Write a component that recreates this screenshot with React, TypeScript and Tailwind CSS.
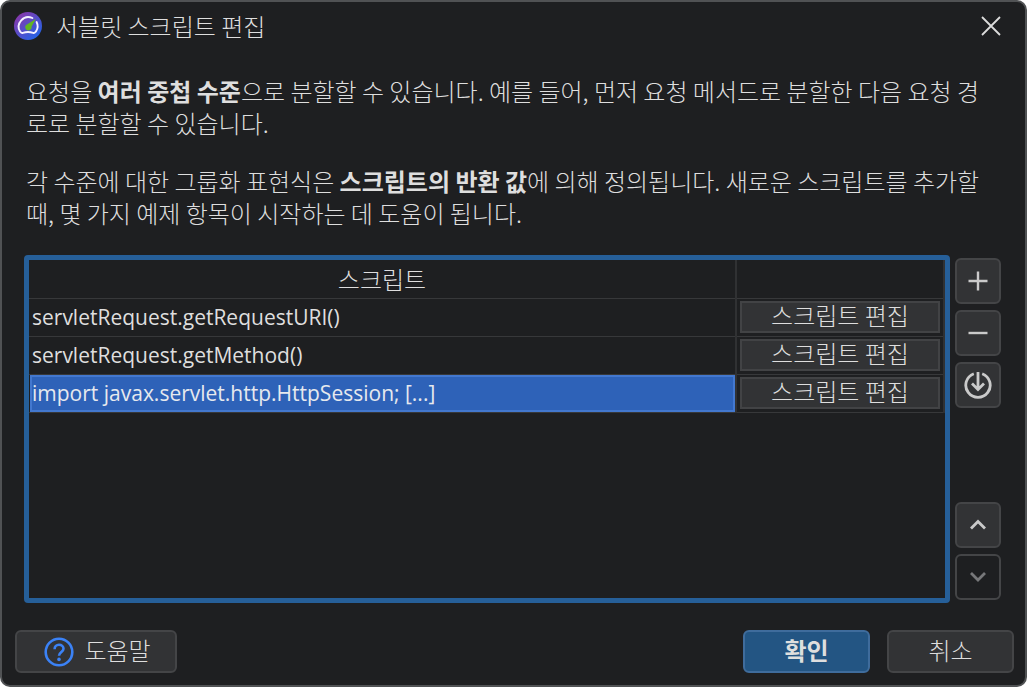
import React from 'react';

const scripts = [
  'servletRequest.getRequestURI()',
  'servletRequest.getMethod()',
  'import javax.servlet.http.HttpSession; [...]',
];

const selectedIndex = 2;

type ToolButtonProps = {
  label: string;
  disabled?: boolean;
  children: React.ReactNode;
};

const ToolButton: React.FC<ToolButtonProps> = ({ label, disabled, children }) => {
  return (
    <button
      type="button"
      aria-label={label}
      disabled={disabled}
      className="flex size-[46px] items-center justify-center rounded-md border-2 border-[#444547] bg-[#323335] text-[#cacaca] disabled:bg-transparent disabled:text-[#77787a]"
    >
      <svg className="size-7" viewBox="0 0 28 28" fill="none" stroke="currentColor" strokeWidth="2.4">
        {children}
      </svg>
    </button>
  );
};

const TitleBar: React.FC = () => {
  return (
    <header className="flex h-12 items-center justify-between pl-3 pr-6">
      <div className="flex items-center gap-[14px]">
        <svg className="size-7" viewBox="0 0 28 28" fill="none">
          <defs>
            <linearGradient id="logo" x1="4" y1="4" x2="22" y2="25" gradientUnits="userSpaceOnUse">
              <stop stopColor="#8439ad" />
              <stop offset="1" stopColor="#2861e4" />
            </linearGradient>
          </defs>
          <circle cx="14" cy="14" r="14" fill="url(#logo)" />
          <path
            d="M18.4 6A9.6 9.6 0 0 0 6.1 19.6C6.8 20.7 7.6 21.3 8.9 20.8C12.5 19.6 15.5 19.6 19.1 20.8C20.4 21.3 21.2 20.7 21.9 19.6A9.6 9.6 0 0 0 22.6 10"
            stroke="#f4f1ff"
            strokeWidth="1.9"
            strokeLinecap="round"
          />
          <path d="M22 6.8L17.6 14.6A3.2 3.2 0 1 1 12.9 12.4Z" fill="#62b522" />
        </svg>
        <h1>서블릿 스크립트 편집</h1>
      </div>
      <button type="button" aria-label="닫기" className="text-[#dcdcdc]">
        <svg className="size-5" viewBox="0 0 20 20" stroke="currentColor" strokeWidth="1.8">
          <path d="M1 1L19 19M19 1L1 19" />
        </svg>
      </button>
    </header>
  );
};

const ScriptTable: React.FC = () => {
  return (
    <div className="min-w-0 flex-1 rounded-[4px] border-[5px] border-[#265f99]">
      <table className="w-full table-fixed border-collapse">
        <thead>
          <tr className="h-[38px] border-b border-[#37383a]">
            <th className="p-0 font-light leading-8">스크립트</th>
            <th aria-label="동작" className="w-[208px] border-x-2 border-[#303133] p-0" />
          </tr>
        </thead>
        <tbody>
          {scripts.map((script, index) => (
            <tr key={script} className="h-[38px] border-b border-[#37383a]">
              <td className="h-[38px] p-0">
                <div
                  className={
                    index === selectedIndex
                      ? 'ml-px h-[37px] truncate border-2 border-[#4378cf] bg-[#2e62b8] font-["Open_Sans"] text-[21px] font-normal leading-8 text-[#e6e9ee]'
                      : 'ml-px h-[37px] truncate border-2 border-transparent font-["Open_Sans"] text-[21px] font-normal leading-8'
                  }
                >
                  {script}
                </div>
              </td>
              <td className="border-x-2 border-[#303133] px-[3px] py-0">
                <button
                  type="button"
                  className="flex h-8 w-full items-center justify-center border-2 border-[#424345] bg-[#323335] pb-1"
                >
                  스크립트 편집
                </button>
              </td>
            </tr>
          ))}
        </tbody>
      </table>
    </div>
  );
};

const App: React.FC = () => {
  return (
    <div className="min-h-screen bg-white">
      <main className="flex min-h-screen flex-col rounded-[10px] border-2 border-[#505254] bg-[#1e1f21] font-['Noto_Sans_CJK_KR',sans-serif] text-2xl font-light leading-8 text-[#dedede]">
        <TitleBar />

        <section className="mt-[25px] space-y-[26px] pl-6 pr-8">
          <p>
            요청을 <b className="font-bold">여러 중첩 수준</b>으로 분할할 수 있습니다. 예를 들어, 먼저 요청 메서드로 분할한
            다음 요청 경로로 분할할 수 있습니다.
          </p>
          <p>
            각 수준에 대한 그룹화 표현식은 <b className="font-bold">스크립트의 반환 값</b>에 의해 정의됩니다. 새로운
            스크립트를 추가할 때, 몇 가지 예제 항목이 시작하는 데 도움이 됩니다.
          </p>
        </section>

        <section className="mt-[26px] flex flex-1 gap-[5px] pl-[22px] pr-6">
          <ScriptTable />
          <div className="flex flex-col gap-[6px] py-[3px]">
            <ToolButton label="추가">
              <path d="M14 4.5V23.5M4.5 14H23.5" />
            </ToolButton>
            <ToolButton label="제거">
              <path d="M4.5 14H23.5" />
            </ToolButton>
            <ToolButton label="가져오기">
              <path d="M9.8 2.7A12.2 12.2 0 1 0 18.2 2.7M14 1V18M8 12.5L14 18.5L20 12.5" strokeWidth="2.8" />
            </ToolButton>
            <div className="flex-1" />
            <ToolButton label="위로">
              <path d="M7 17.5L14 10.5L21 17.5" strokeWidth="2.8" />
            </ToolButton>
            <ToolButton label="아래로" disabled>
              <path d="M7 10L14 17L21 10" strokeWidth="2.8" />
            </ToolButton>
          </div>
        </section>

        <footer className="mb-3 mt-[27px] flex items-center gap-[17px] pl-[13px] pr-[11px]">
          <button
            type="button"
            className="mr-auto flex h-[43px] w-[162px] items-center justify-center gap-[10px] rounded-md border-2 border-[#444547] bg-[#323335] pl-[3px]"
          >
            <svg className="size-[30px]" viewBox="0 0 30 30" fill="none" stroke="#3b82f6" strokeWidth="2.6">
              <circle cx="15" cy="15" r="13.3" />
              <path d="M10.6 12.2C10.6 9.5 12.5 7.8 15 7.8C17.6 7.8 19.5 9.5 19.5 11.8C19.5 14.9 15 15.2 15 18.8" />
              <circle cx="15" cy="22.4" r="1.8" fill="#3b82f6" stroke="none" />
            </svg>
            <span className="pb-[3px]">도움말</span>
          </button>
          <button
            type="button"
            className="flex h-[43px] w-[127px] items-center justify-center rounded-md border-2 border-[#3f6c9c] bg-[#235583] pb-[3px] font-bold"
          >
            확인
          </button>
          <button
            type="button"
            className="flex h-[43px] w-[127px] items-center justify-center rounded-md border-2 border-[#444547] bg-[#323335] pb-[3px]"
          >
            취소
          </button>
        </footer>
      </main>
    </div>
  );
};

export default App;
